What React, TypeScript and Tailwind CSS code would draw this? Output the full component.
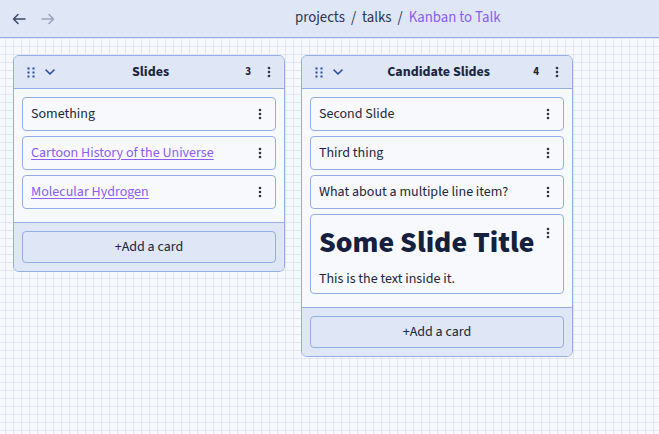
import React from "react";

const font = { fontFamily: '"Source Sans 3","Lato","Noto Sans",sans-serif' };

function Kebab() {
  return (
    <svg width="4" height="12" viewBox="0 0 4 12" className="text-[#2a3450]">
      <circle cx="2" cy="2" r="1.3" fill="currentColor" />
      <circle cx="2" cy="6" r="1.3" fill="currentColor" />
      <circle cx="2" cy="10" r="1.3" fill="currentColor" />
    </svg>
  );
}

function Grip() {
  return (
    <svg width="8" height="11" viewBox="0 0 8 11" className="text-[#2b4a9c]">
      {[1.5, 5.5, 9.5].map((y) =>
        [1.5, 6.5].map((x) => <rect key={`${x}-${y}`} x={x - 1} y={y - 1} width="2" height="2" fill="currentColor" />)
      )}
    </svg>
  );
}

function Chevron() {
  return (
    <svg width="12" height="8" viewBox="0 0 12 8" fill="none" stroke="#2b4a9c" strokeWidth="1.6" strokeLinecap="round" strokeLinejoin="round">
      <path d="M2 2l4 4 4-4" />
    </svg>
  );
}

function Card({ children, link }: { children: React.ReactNode; link?: boolean }) {
  return (
    <div className="flex items-center justify-between h-[34px] pl-[8px] pr-[13px] rounded-[4px] border border-[#93aee3] bg-[#f7f9fd]">
      <span className={link ? "text-[14px] text-[#8b5cf6] underline underline-offset-2" : "text-[14px] text-[#1c2640]"}>{children}</span>
      <Kebab />
    </div>
  );
}

function Column({ title, count, children }: { title: string; count: number; children: React.ReactNode }) {
  return (
    <div className="w-[272px] rounded-[6px] border border-[#93aee3] bg-[#f7f9fd] overflow-hidden">
      <div className="h-[33px] flex items-center pl-[13px] pr-[13px] bg-[#dfe6f5] border-b border-[#93aee3]">
        <Grip />
        <span className="ml-[9px] flex items-center"><Chevron /></span>
        <span className="flex-1 text-center text-[14px] font-bold text-[#1c2640]">{title}</span>
        <span className="text-[11px] font-bold text-[#1c2640] mr-[16px]">{count}</span>
        <Kebab />
      </div>
      <div className="flex flex-col gap-[5px] px-[8px] pt-[8px] pb-[13px]">{children}</div>
      <div className="bg-[#dfe6f5] border-t border-[#93aee3] px-[8px] pt-[8px] pb-[8px]">
        <div className="h-[32px] flex items-center justify-center rounded-[4px] border border-[#93aee3] bg-[#dfe6f5] text-[14px] text-[#1c2640]">
          +Add a card
        </div>
      </div>
    </div>
  );
}

export default function App() {
  return (
    <div style={font} className="w-[659px] h-[434px] flex flex-col bg-[#f7f8fc] text-[#1c2640]">
      <div className="h-[38px] shrink-0 flex items-center bg-[#dfe6f5] border-b border-[#93aee3] relative">
        <div className="flex items-center gap-[15px] pl-[12px]">
          <svg width="14" height="12" viewBox="0 0 14 12" fill="none" stroke="#3d4a66" strokeWidth="1.5" strokeLinecap="round" strokeLinejoin="round">
            <path d="M13 6H1.5M6 1.5L1.5 6 6 10.5" />
          </svg>
          <svg width="14" height="12" viewBox="0 0 14 12" fill="none" stroke="#9aa5bd" strokeWidth="1.5" strokeLinecap="round" strokeLinejoin="round">
            <path d="M1 6h11.5M8 1.5L12.5 6 8 10.5" />
          </svg>
        </div>
        <div className="ml-[240px] text-[14.8px] text-[#2a3450] flex items-center gap-[6px]">
          <span>projects</span>
          <span>/</span>
          <span>talks</span>
          <span>/</span>
          <span className="text-[#8b5cf6]">Kanban to Talk</span>
        </div>
      </div>
      <div className="flex-1 flex items-start gap-[16px] pl-[13px] pt-[17px] bg-[#f7f8fc] bg-[linear-gradient(to_right,#e2e6f2_1px,transparent_1px),linear-gradient(to_bottom,#e2e6f2_1px,transparent_1px)] bg-[size:8px_8px] bg-[position:5px_0px]">
        <Column title="Slides" count={3}>
          <Card>Something</Card>
          <Card link>Cartoon History of the Universe</Card>
          <Card link>Molecular Hydrogen</Card>
        </Column>
        <Column title="Candidate Slides" count={4}>
          <Card>Second Slide</Card>
          <Card>Third thing</Card>
          <Card>What about a multiple line item?</Card>
          <div className="relative rounded-[4px] border border-[#93aee3] bg-[#f7f9fd] pl-[8px] pr-[13px] pt-[8px] pb-[4px]">
            <div className="text-[30px] font-extrabold leading-[40px] text-[#14203d]">Some Slide Title</div>
            <div className="mt-[6px] text-[14px] leading-[20px] text-[#1c2640]">This is the text inside it.</div>
            <div className="absolute right-[13px] top-[12px]"><Kebab /></div>
          </div>
        </Column>
      </div>
    </div>
  );
}
